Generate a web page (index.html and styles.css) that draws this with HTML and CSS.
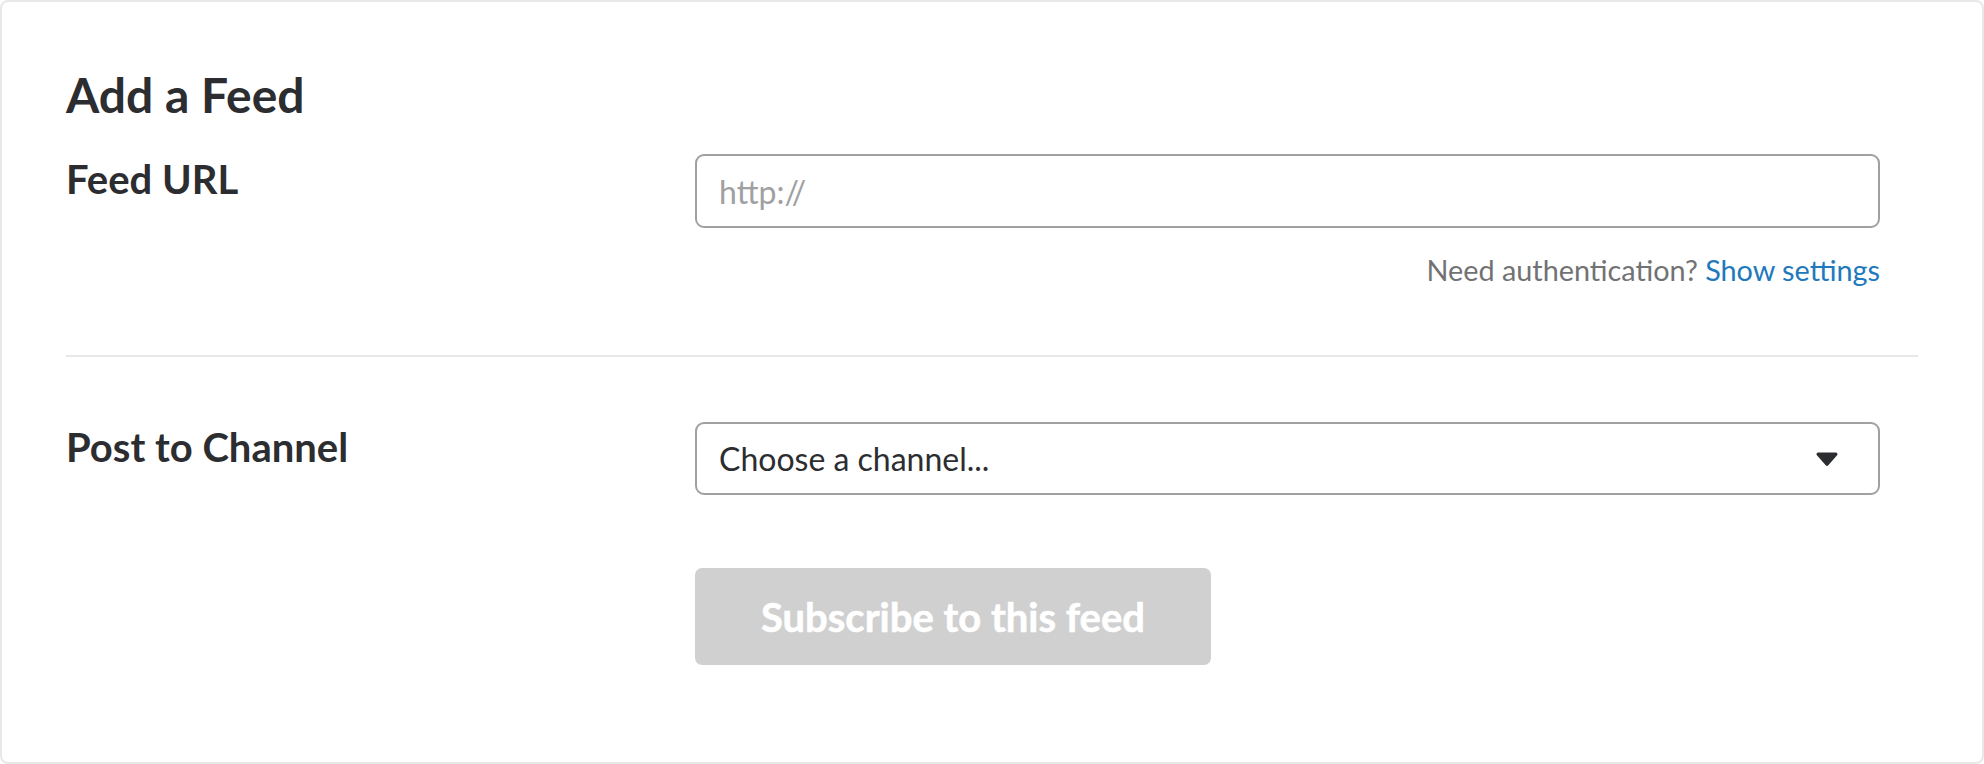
FILE: index.html
```html
<!DOCTYPE html>
<html lang="en">
<head>
<meta charset="utf-8">
<title>Add a Feed</title>
<link rel="stylesheet" href="styles.css">
</head>
<body>
<div class="card">
  <h2 class="title">Add a Feed</h2>
  <div class="row">
    <label class="label" for="feed-url">Feed URL</label>
    <div class="field">
      <input id="feed-url" class="text-input" type="text" placeholder="http://">
      <p class="helper">Need authentication? <a class="link" href="#">Show settings</a></p>
    </div>
  </div>
  <hr class="divider">
  <div class="row">
    <label class="label">Post to Channel</label>
    <div class="field">
      <div class="select">
        <span class="select-text">Choose a channel...</span>
        <svg class="caret" width="22" height="14" viewBox="0 0 22 14" aria-hidden="true"><path d="M2.2 0.5 H19.8 a1.7 1.7 0 0 1 1.3 2.8 L12.3 13.2 a1.7 1.7 0 0 1 -2.6 0 L0.9 3.3 A1.7 1.7 0 0 1 2.2 0.5Z" fill="#2c2d30"/></svg>
      </div>
      <button class="btn" type="button" disabled>Subscribe to this feed</button>
    </div>
  </div>
</div>
</body>
</html>
```

FILE: styles.css
```css
* { box-sizing: border-box; }
html, body { margin: 0; padding: 0; background: #ffffff; }
body {
  font-family: Lato, "Liberation Sans", sans-serif;
  color: #2c2d30;
}
.card {
  height: 764px;
  border: 2px solid #e8e8e8;
  border-radius: 8px;
  padding: 63px 64px 0 64px;
  background: #fff;
}
.title {
  margin: 0;
  font-size: 48px;
  line-height: 59px;
  font-weight: 700;
}
.row {
  display: grid;
  grid-template-columns: 629px 1185px;
  margin-top: 30px;
}
.label {
  font-size: 40px;
  line-height: 46px;
  font-weight: 700;
  padding-top: 2px;
}
.field {
  display: flex;
  flex-direction: column;
  align-items: stretch;
}
.text-input {
  height: 74px;
  border: 2px solid #a0a0a2;
  border-radius: 9px;
  padding: 0 22px;
  font-family: Lato, "Liberation Sans", sans-serif;
  font-size: 32px;
  color: #2c2d30;
  outline: none;
  background: #fff;
}
.text-input::placeholder { color: #a0a0a2; }
.helper {
  margin: 25px 0 0 0;
  text-align: right;
  font-size: 28.8px;
  line-height: 34px;
  color: #717274;
}
.link { color: #2179bd; text-decoration: none; }
.divider {
  margin: 68px 0 0 0;
  border: 0;
  height: 2px;
  background: #e8e8e8;
}
.divider + .row { margin-top: 65px; }
.select {
  height: 73px;
  border: 2px solid #a0a0a2;
  border-radius: 9px;
  padding: 0 40px 0 22px;
  display: flex;
  align-items: center;
  justify-content: space-between;
  font-size: 32px;
}
.caret { display: block; }
.btn {
  margin-top: 73px;
  align-self: flex-start;
  width: 516px;
  height: 97px;
  border: 0;
  border-radius: 7px;
  background: #cfd0cf;
  color: #ffffff;
  font-family: Lato, "Liberation Sans", sans-serif;
  font-size: 40px;
  font-weight: 700;
  -webkit-text-stroke: 0.6px #ffffff;
  padding: 0;
}
```
